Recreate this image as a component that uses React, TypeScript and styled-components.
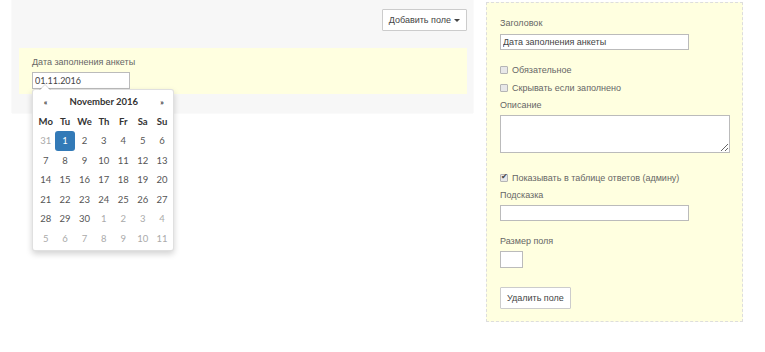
import React from 'react';
import styled, { createGlobalStyle } from 'styled-components';

const GlobalStyle = createGlobalStyle`
  html, body {
    margin: 0;
    padding: 0;
    background: #ffffff;
  }
  body {
    font-family: "Liberation Sans", Arial, sans-serif;
    font-size: 9px;
    color: #555;
  }
`;

const Page = styled.div`
  display: flex;
  align-items: flex-start;
  gap: 13px;
  padding-left: 12px;
  width: 765px;
  height: 352px;
  box-sizing: border-box;
`;

const Canvas = styled.div`
  width: 461px;
  box-sizing: border-box;
  background: #f7f7f7;
  box-shadow: 0 0 1px rgba(0, 0, 0, 0.12);
  padding: 9px 6px 19px 7px;
  display: flex;
  flex-direction: column;
  gap: 17px;
`;

const Toolbar = styled.div`
  display: flex;
  justify-content: flex-end;
`;

const Button = styled.button<{ $pad?: number }>`
  height: 22px;
  padding: 0 ${({ $pad }) => $pad ?? 7}px;
  background: #fff;
  border: 1px solid #ccc;
  border-radius: 1px;
  font-family: "Liberation Sans", Arial, sans-serif;
  font-size: 9px;
  color: #444;
  display: inline-flex;
  align-items: center;
  gap: 3px;
  cursor: pointer;
`;

const Caret = styled.span`
  width: 0;
  height: 0;
  border-left: 3px solid transparent;
  border-right: 3px solid transparent;
  border-top: 3px solid #444;
`;

const FieldBox = styled.div`
  position: relative;
  background: #ffffe0;
  height: 46px;
  box-sizing: border-box;
  padding: 8px 13px 0;
  display: flex;
  flex-direction: column;
  align-items: flex-start;
  gap: 4px;
`;

const Label = styled.div`
  font-size: 9px;
  color: #666;
  line-height: 12px;
`;

const TextInput = styled.input<{ $w: number; $h?: number; $font?: string }>`
  width: ${({ $w }) => $w}px;
  height: ${({ $h }) => $h ?? 17}px;
  box-sizing: border-box;
  border: 1px solid #bbb;
  background: #fff;
  padding: 0 2px;
  margin: 0;
  font-family: ${({ $font }) => $font ?? '"Liberation Sans", Arial, sans-serif'};
  font-size: 9px;
  color: #444;
  outline: none;
`;

const Picker = styled.div`
  position: absolute;
  left: 13px;
  top: 41px;
  width: 142px;
  box-sizing: border-box;
  padding: 2px 3px;
  background: #fff;
  border: 1px solid rgba(0, 0, 0, 0.12);
  border-radius: 3px;
  box-shadow: 0 3px 6px rgba(0, 0, 0, 0.18);
  font-family: Lato, "Open Sans", sans-serif;
  z-index: 2;

  &::before {
    content: '';
    position: absolute;
    top: -6px;
    left: 6px;
    border-left: 6px solid transparent;
    border-right: 6px solid transparent;
    border-bottom: 6px solid rgba(0, 0, 0, 0.15);
  }
  &::after {
    content: '';
    position: absolute;
    top: -5px;
    left: 7px;
    border-left: 5px solid transparent;
    border-right: 5px solid transparent;
    border-bottom: 5px solid #fff;
  }
`;

const Grid = styled.div`
  display: grid;
  grid-template-columns: repeat(7, 19.4px);
  grid-auto-rows: 19.5px;
`;

const HeadCell = styled.div<{ $span?: number }>`
  grid-column: span ${({ $span }) => $span ?? 1};
  display: flex;
  align-items: center;
  justify-content: center;
  font-weight: 700;
  font-size: 9.5px;
  color: #333;
`;

const Nav = styled(HeadCell)`
  font-size: 8px;
`;

const Day = styled.div<{ $muted?: boolean; $active?: boolean }>`
  display: flex;
  align-items: center;
  justify-content: center;
  font-size: 9.5px;
  border-radius: 3px;
  color: ${({ $muted, $active }) => ($active ? '#fff' : $muted ? '#aaa' : '#555')};
  background: ${({ $active }) => ($active ? '#337ab7' : 'transparent')};
`;

const Settings = styled.div`
  margin-top: 2px;
  width: 257px;
  box-sizing: border-box;
  background: #ffffe0;
  border: 1px dashed #ddd;
  padding: 14px 12px 12px 13px;
  display: flex;
  flex-direction: column;
  align-items: flex-start;
`;

const Stack = styled.div<{ $gap: number; $top?: number }>`
  display: flex;
  flex-direction: column;
  align-items: flex-start;
  gap: ${({ $gap }) => $gap}px;
  margin-top: ${({ $top }) => $top ?? 0}px;
`;

const CheckRow = styled.label<{ $top: number }>`
  display: flex;
  align-items: center;
  gap: 4px;
  margin-top: ${({ $top }) => $top}px;
  font-size: 9px;
  color: #666;
  line-height: 12px;
`;

const Check = styled.input`
  appearance: none;
  position: relative;
  width: 8px;
  height: 8px;
  margin: 0;
  border: 1px solid #b5b5b5;
  border-radius: 1px;
  background: #e8e8e8;

  &:checked::after {
    content: '✔';
    position: absolute;
    left: 0;
    top: -3px;
    font-size: 8px;
    color: #444;
  }
`;

const TextArea = styled.textarea`
  width: 230px;
  height: 38px;
  box-sizing: border-box;
  border: 1px solid #bbb;
  background: #fff;
  margin: 0;
  resize: vertical;
`;

const weeks: Array<Array<[number, boolean?]>> = [
  [[31, true], [1], [2], [3], [4], [5], [6]],
  [[7], [8], [9], [10], [11], [12], [13]],
  [[14], [15], [16], [17], [18], [19], [20]],
  [[21], [22], [23], [24], [25], [26], [27]],
  [[28], [29], [30], [1, true], [2, true], [3, true], [4, true]],
  [[5, true], [6, true], [7, true], [8, true], [9, true], [10, true], [11, true]],
];

const DatePicker: React.FC = () => (
  <Picker>
    <Grid>
      <Nav>«</Nav>
      <HeadCell $span={5}>November 2016</HeadCell>
      <Nav>»</Nav>
      {['Mo', 'Tu', 'We', 'Th', 'Fr', 'Sa', 'Su'].map((d) => (
        <HeadCell key={d}>{d}</HeadCell>
      ))}
      {weeks.flat().map(([n, muted], i) => (
        <Day key={i} $muted={muted} $active={i === 1}>
          {n}
        </Day>
      ))}
    </Grid>
  </Picker>
);

export default function App() {
  return (
    <>
      <GlobalStyle />
      <Page>
        <Canvas>
          <Toolbar>
            <Button $pad={6}>
              Добавить поле <Caret />
            </Button>
          </Toolbar>
          <FieldBox>
            <Label>Дата заполнения анкеты</Label>
            <TextInput $w={98} $font={'Lato, "Open Sans", sans-serif'} defaultValue="01.11.2016" />
            <DatePicker />
          </FieldBox>
        </Canvas>

        <Settings>
          <Stack $gap={5}>
            <Label>Заголовок</Label>
            <TextInput $w={189} $h={16} defaultValue="Дата заполнения анкеты" />
          </Stack>
          <CheckRow $top={14}>
            <Check type="checkbox" /> Обязательное
          </CheckRow>
          <CheckRow $top={6}>
            <Check type="checkbox" /> Скрывать если заполнено
          </CheckRow>
          <Stack $gap={4} $top={5}>
            <Label>Описание</Label>
            <TextArea />
          </Stack>
          <CheckRow $top={19}>
            <Check type="checkbox" defaultChecked /> Показывать в таблице ответов (админу)
          </CheckRow>
          <Stack $gap={4} $top={5}>
            <Label>Подсказка</Label>
            <TextInput $w={189} $h={16} />
          </Stack>
          <Stack $gap={4} $top={14}>
            <Label>Размер поля</Label>
            <TextInput $w={23} />
          </Stack>
          <Stack $gap={0} $top={19}>
            <Button $pad={6}>Удалить поле</Button>
          </Stack>
        </Settings>
      </Page>
    </>
  );
}
